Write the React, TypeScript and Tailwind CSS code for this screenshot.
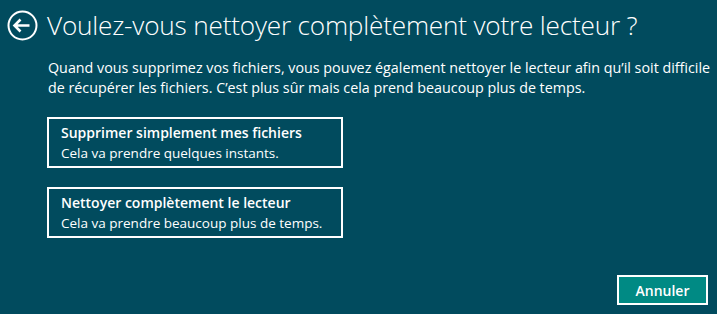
export default function App() {
  return (
    <div className="w-[717px] h-[314px] bg-[#014b5e] text-white flex flex-col font-['Open_Sans',sans-serif] overflow-hidden">
      <div className="flex items-center pt-[9px] pl-[7px]">
        <svg width="31" height="31" viewBox="0 0 31 31" className="shrink-0">
          <circle cx="15.5" cy="15.5" r="14" fill="none" stroke="white" strokeWidth="2" />
          <path d="M7.5 15.5h15M13.5 9.5l-6 6 6 6" fill="none" stroke="white" strokeWidth="2.6" />
        </svg>
        <h1 className="ml-[9px] text-[26.2px] font-light leading-[32px] tracking-[-0.2px]">
          Voulez-vous nettoyer complètement votre lecteur ?
        </h1>
      </div>
      <p className="mt-[17px] ml-[48px] text-[14.3px] leading-[20px]">
        Quand vous supprimez vos fichiers, vous pouvez également nettoyer le lecteur afin qu’il soit difficile
        <br />
        de récupérer les fichiers. C’est plus sûr mais cela prend beaucoup plus de temps.
      </p>
      <div className="mt-[19px] ml-[47px] flex flex-col gap-[19px]">
        <button className="w-[296px] h-[51px] border-2 border-white text-left pl-[12px] flex flex-col justify-center">
          <span className="text-[14px] font-semibold leading-[20px]">Supprimer simplement mes fichiers</span>
          <span className="text-[13.5px] leading-[20px]">Cela va prendre quelques instants.</span>
        </button>
        <button className="w-[296px] h-[51px] border-2 border-white text-left pl-[12px] flex flex-col justify-center">
          <span className="text-[14px] font-semibold leading-[20px]">Nettoyer complètement le lecteur</span>
          <span className="text-[13.5px] leading-[20px]">Cela va prendre beaucoup plus de temps.</span>
        </button>
      </div>
      <div className="flex-1" />
      <div className="flex justify-end pr-[9px] pb-[9px]">
        <button className="w-[91px] h-[30px] border-2 border-white bg-[#008a84] text-[14px] font-semibold">Annuler</button>
      </div>
    </div>
  )
}
